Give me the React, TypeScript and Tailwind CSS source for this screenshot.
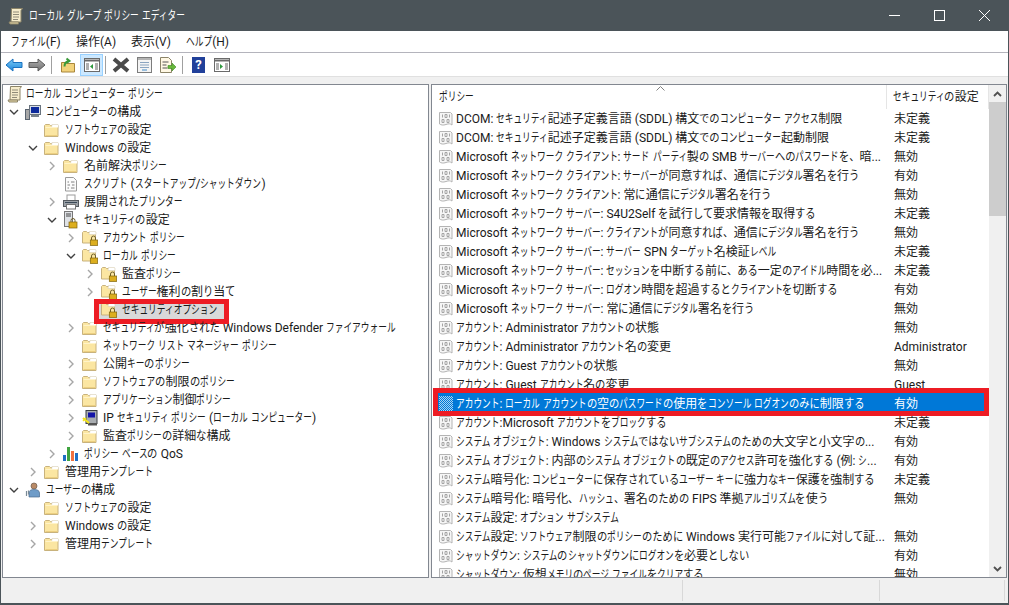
import { ReactNode } from 'react';

// the reference font has condensed kana; Noto's kana are exactly 1em wide so a run can be scaled from its length
const KATAKANA_PX = 8.7;
const HIRAGANA_PX = 10.3;
const FONT_PX = 12;

function KanaRun({ text, px }: { text: string; px: number }) {
  return (
    <span
      className="inline-block origin-left"
      style={{ transform: `scaleX(${px / FONT_PX})`, marginRight: -(FONT_PX - px) * text.length }}
    >
      {text}
    </span>
  );
}

function JP({ text }: { text: string }) {
  const parts = text.split(/([\u30A0-\u30FF]+|[\u3001\u3040-\u309F]+)/);
  return (
    <span>
      {parts.map((p, i) => {
        if (/^[\u30A0-\u30FF]/.test(p)) return <KanaRun key={i} text={p} px={KATAKANA_PX} />;
        if (/^[\u3001\u3040-\u309F]/.test(p)) return <KanaRun key={i} text={p} px={HIRAGANA_PX} />;
        return (
          <span key={i} className="whitespace-pre">
            {p}
          </span>
        );
      })}
    </span>
  );
}

function Folder() {
  return (
    <svg width="16" height="16" viewBox="0 0 16 16">
      <path d="M0.500 3.500l1-1h4l1 1h7.500v11h-13.500z" fill="#fbe6a2" stroke="#c8b27c" />
      <path d="M8 2.500h6l.5 1v2h-7z" fill="#fff" stroke="#d8cfb4" strokeWidth="0.600" />
      <path d="M1.500 5.500h12" stroke="#fff3c8" />
      <path d="M1.500 13.500h12" stroke="#eccf80" />
    </svg>
  );
}

function LockFolder() {
  return (
    <svg width="16" height="16" viewBox="0 0 16 16">
      <path d="M0.500 2.500l1-1h3l1 1h8v10.500h-13z" fill="#fbe6a2" stroke="#c8b27c" />
      <path d="M7.500 1.500h6l.5 1v2h-7z" fill="#fff" stroke="#d8cfb4" strokeWidth="0.600" />
      <path d="M9.500 10v-2a2 2 0 0 1 4 0v2" fill="none" stroke="#6e5f2a" />
      <rect x="8.300" y="10" width="7.400" height="5.500" fill="#dcae1e" stroke="#80650e" strokeWidth="0.700" />
    </svg>
  );
}

function Scroll() {
  return (
    <svg width="16" height="18" viewBox="0 0 16 18">
      <path d="M3.500 1.500h11l-1.500 2v11.500h-10z" fill="#f6eccb" stroke="#8c8468" />
      <path d="M5 5h6M5 7.500h6M5 10h6M5 12.500h5" stroke="#8f8a78" />
      <path d="M1 15h9.500v2h-8.500z" fill="#e8d9a8" stroke="#8c8468" />
    </svg>
  );
}

function ComputerIcon() {
  return (
    <svg width="16" height="16" viewBox="0 0 16 16">
      <rect x="0.500" y="5.500" width="4" height="10" fill="#a8a8a8" stroke="#5a6470" />
      <rect x="4.500" y="1.500" width="11" height="9" fill="#d8dee6" stroke="#69737e" />
      <rect x="6" y="3" width="8" height="6" fill="#0d2a9c" />
      <path d="M6 12h8" stroke="#78828c" strokeWidth="2" />
    </svg>
  );
}

function UserIcon() {
  return (
    <svg width="16" height="16" viewBox="0 0 16 16">
      <circle cx="9" cy="4" r="3" fill="#b98a66" stroke="#6d5a4c" strokeWidth="0.700" />
      <path d="M4 15v-4c0-2.500 2-3.500 5-3.500s5.500 1 5.500 3.500v4z" fill="#6f9cc8" stroke="#4a6a8c" strokeWidth="0.700" />
      <path d="M1.500 9v5M3.500 8.500v4" stroke="#7a8a96" strokeWidth="1.200" />
    </svg>
  );
}

function ScriptIcon() {
  return (
    <svg width="16" height="16" viewBox="0 0 16 16">
      <path d="M2.500 1.500h8l3 3v10.500h-11z" fill="#fbfbfb" stroke="#9a9a9a" />
      <path d="M4.500 6h1.500M8 6h3.500M9 9h2.500M4.500 9h2.500M4.500 12h1.500M8 12h3.500" stroke="#808080" />
    </svg>
  );
}

function PrinterIcon() {
  return (
    <svg width="16" height="16" viewBox="0 0 16 16">
      <rect x="4" y="1" width="8" height="6" fill="#fff" stroke="#9b9b9b" />
      <rect x="0.500" y="6.500" width="15" height="6" fill="#9aa0a6" stroke="#565b60" />
      <rect x="3.500" y="10.500" width="9" height="4.500" fill="#fff" stroke="#777" />
      <path d="M2 8.500h12" stroke="#3c4a58" />
    </svg>
  );
}

function ServerLock() {
  return (
    <svg width="16" height="18" viewBox="0 0 16 18">
      <rect x="1.500" y="0.500" width="8" height="15" fill="#dfe2e6" stroke="#777" />
      <path d="M3 3h5M3 5h5" stroke="#444" />
      <path d="M8 11v-1.500a2 2 0 0 1 4 0v1.500" fill="none" stroke="#6e5f2a" />
      <rect x="6" y="11" width="8" height="6" fill="#dcae1e" stroke="#80650e" strokeWidth="0.700" />
    </svg>
  );
}

function QosIcon() {
  return (
    <svg width="16" height="16" viewBox="0 0 16 16">
      <rect x="0" y="9" width="3" height="6" fill="#1f6fc4" />
      <rect x="4" y="1" width="3" height="14" fill="#3fa43f" />
      <rect x="8" y="5" width="3" height="10" fill="#f07040" />
      <rect x="12" y="7" width="3" height="8" fill="#1f6fc4" />
    </svg>
  );
}

function IpSecIcon() {
  return (
    <svg width="16" height="16" viewBox="0 0 16 16">
      <rect x="4" y="0.500" width="11" height="13" fill="#a9adb1" stroke="#3a3f44" />
      <rect x="6" y="2.500" width="7" height="5" fill="#1414a8" />
      <rect x="6" y="13" width="9" height="2.500" fill="#555" />
      <path d="M1 8l6 5" stroke="#f2e21c" strokeWidth="2.200" />
      <path d="M1 11l3-3" stroke="#f2e21c" strokeWidth="1.500" />
    </svg>
  );
}

function PolicyIcon({ selected }: { selected?: boolean }) {
  if (selected) {
    return (
      <svg width="14" height="15" viewBox="0 0 14 15">
        <defs>
          <pattern id="chk" width="2" height="2" patternUnits="userSpaceOnUse">
            <rect width="2" height="2" fill="#0078d7" />
            <rect width="1" height="1" fill="#a8d4f2" />
            <rect x="1" y="1" width="1" height="1" fill="#a8d4f2" />
          </pattern>
        </defs>
        <rect width="14" height="15" fill="url(#chk)" />
      </svg>
    );
  }
  return (
    <svg width="14" height="15" viewBox="0 0 14 15">
      <path d="M0.500 1.500h11l1.500 1.500v11c-2-1.500-3-1.500-6-.5s-5 .5-6.500-.5z" fill="#f6f6f6" stroke="#b4b4b4" />
      <path d="M3.500 3.500v3M6 3.500h2v3h-2zM3 8.500h2v3h-2zM8 8.500h2v3h-2zM10.500 3.500v3" fill="none" stroke="#a4a4a4" />
    </svg>
  );
}

type Row = { lvl: 0 | 1 | 2 | 3 | 4 | 5; arrow?: 'open' | 'closed'; icon: ReactNode; text: string; red?: boolean };

const padByLvl = ['pl-[4px]', 'pl-[1px]', 'pl-[20px]', 'pl-[39px]', 'pl-[58px]', 'pl-[77px]'];

const treeRows: Row[] = [
  { lvl: 0, icon: <Scroll />, text: 'ローカル コンピューター ポリシー' },
  { lvl: 1, arrow: 'open', icon: <ComputerIcon />, text: 'コンピューターの構成' },
  { lvl: 2, icon: <Folder />, text: 'ソフトウェアの設定' },
  { lvl: 2, arrow: 'open', icon: <Folder />, text: 'Windows の設定' },
  { lvl: 3, arrow: 'closed', icon: <Folder />, text: '名前解決ポリシー' },
  { lvl: 3, icon: <ScriptIcon />, text: 'スクリプト (スタートアップ/シャットダウン)' },
  { lvl: 3, arrow: 'closed', icon: <PrinterIcon />, text: '展開されたプリンター' },
  { lvl: 3, arrow: 'open', icon: <ServerLock />, text: 'セキュリティの設定' },
  { lvl: 4, arrow: 'closed', icon: <LockFolder />, text: 'アカウント ポリシー' },
  { lvl: 4, arrow: 'open', icon: <LockFolder />, text: 'ローカル ポリシー' },
  { lvl: 5, arrow: 'closed', icon: <LockFolder />, text: '監査ポリシー' },
  { lvl: 5, arrow: 'closed', icon: <LockFolder />, text: 'ユーザー権利の割り当て' },
  { lvl: 5, icon: <LockFolder />, text: 'セキュリティオプション', red: true },
  { lvl: 4, arrow: 'closed', icon: <Folder />, text: 'セキュリティが強化された Windows Defender ファイアウォール' },
  { lvl: 4, icon: <Folder />, text: 'ネットワーク リスト マネージャー ポリシー' },
  { lvl: 4, arrow: 'closed', icon: <Folder />, text: '公開キーのポリシー' },
  { lvl: 4, arrow: 'closed', icon: <Folder />, text: 'ソフトウェアの制限のポリシー' },
  { lvl: 4, arrow: 'closed', icon: <Folder />, text: 'アプリケーション制御ポリシー' },
  { lvl: 4, arrow: 'closed', icon: <IpSecIcon />, text: 'IP セキュリティ ポリシー (ローカル コンピューター)' },
  { lvl: 4, arrow: 'closed', icon: <Folder />, text: '監査ポリシーの詳細な構成' },
  { lvl: 3, arrow: 'closed', icon: <QosIcon />, text: 'ポリシー ベースの QoS' },
  { lvl: 2, arrow: 'closed', icon: <Folder />, text: '管理用テンプレート' },
  { lvl: 1, arrow: 'open', icon: <UserIcon />, text: 'ユーザーの構成' },
  { lvl: 2, icon: <Folder />, text: 'ソフトウェアの設定' },
  { lvl: 2, arrow: 'closed', icon: <Folder />, text: 'Windows の設定' },
  { lvl: 2, arrow: 'closed', icon: <Folder />, text: '管理用テンプレート' },
];

const policies: [string, string][] = [
  ['DCOM: セキュリティ記述子定義言語 (SDDL) 構文でのコンピューター アクセス制限', '未定義'],
  ['DCOM: セキュリティ記述子定義言語 (SDDL) 構文でのコンピューター起動制限', '未定義'],
  ['Microsoft ネットワーク クライアント: サード パーティ製の SMB サーバーへのパスワードを、暗...', '無効'],
  ['Microsoft ネットワーク クライアント: サーバーが同意すれば、通信にデジタル署名を行う', '有効'],
  ['Microsoft ネットワーク クライアント: 常に通信にデジタル署名を行う', '無効'],
  ['Microsoft ネットワーク サーバー: S4U2Self を試行して要求情報を取得する', '未定義'],
  ['Microsoft ネットワーク サーバー: クライアントが同意すれば、通信にデジタル署名を行う', '無効'],
  ['Microsoft ネットワーク サーバー: サーバー SPN ターゲット名検証レベル', '未定義'],
  ['Microsoft ネットワーク サーバー: セッションを中断する前に、ある一定のアイドル時間を必...', '未定義'],
  ['Microsoft ネットワーク サーバー: ログオン時間を超過するとクライアントを切断する', '有効'],
  ['Microsoft ネットワーク サーバー: 常に通信にデジタル署名を行う', '無効'],
  ['アカウント: Administrator アカウントの状態', '無効'],
  ['アカウント: Administrator アカウント名の変更', 'Administrator'],
  ['アカウント: Guest アカウントの状態', '無効'],
  ['アカウント: Guest アカウント名の変更', 'Guest'],
  ['アカウント: ローカル アカウントの空のパスワードの使用をコンソール ログオンのみに制限する', '有効'],
  ['アカウント:Microsoft アカウントをブロックする', '未定義'],
  ['システム オブジェクト: Windows システムではないサブシステムのための大文字と小文字の...', '有効'],
  ['システム オブジェクト: 内部のシステム オブジェクトの既定のアクセス許可を強化する (例: シ...', '有効'],
  ['システム暗号化: コンピューターに保存されているユーザー キーに強力なキー保護を強制する', '未定義'],
  ['システム暗号化: 暗号化、ハッシュ、署名のための FIPS 準拠アルゴリズムを使う', '無効'],
  ['システム設定: オプション サブシステム', ''],
  ['システム設定: ソフトウェア制限のポリシーのために Windows 実行可能ファイルに対して証...', '無効'],
  ['シャットダウン: システムのシャットダウンにログオンを必要としない', '有効'],
  ['シャットダウン: 仮想メモリのページ ファイルをクリアする', '無効'],
];

function Chevron({ dir }: { dir?: 'open' | 'closed' }) {
  return (
    <span className="w-[19px] h-full flex items-center justify-center shrink-0">
      {dir === 'open' && (
        <svg width="10" height="6" viewBox="0 0 10 6">
          <path d="M1 1l4 4 4-4" fill="none" stroke="#404040" strokeWidth="1.400" />
        </svg>
      )}
      {dir === 'closed' && (
        <svg width="6" height="10" viewBox="0 0 6 10">
          <path d="M1 1l4 4-4 4" fill="none" stroke="#a6a6a6" strokeWidth="1.400" />
        </svg>
      )}
    </span>
  );
}

function TreeRow({ row }: { row: Row }) {
  if (row.lvl === 0) {
    return (
      <div className="h-[18px] flex items-center pl-[4px] whitespace-nowrap">
        <span className="w-4 mr-[3px] flex">{row.icon}</span>
        <JP text={row.text} />
      </div>
    );
  }
  return (
    <div className={`h-[18px] flex items-center whitespace-nowrap ${padByLvl[row.lvl]}`}>
      <Chevron dir={row.arrow} />
      {row.red ? (
        <span className="relative self-end flex items-center h-[15px] pb-[3px] pl-[2px] pr-[7px] bg-[#d9d9d9]">
          <span className="w-4 mr-[5px] flex">{row.icon}</span>
          <JP text={row.text} />
          <span className="absolute left-[-5px] right-[-5px] top-[-5px] bottom-[-5px] border-[5px] border-[#ed1c24]" />
        </span>
      ) : (
        <>
          <span className="w-4 ml-[2px] mr-[5px] flex">{row.icon}</span>
          <JP text={row.text} />
        </>
      )}
    </div>
  );
}

function PolicyRow({ name, value, selected }: { name: string; value: string; selected?: boolean }) {
  return (
    <div className={`relative h-[19px] flex items-center whitespace-nowrap ${selected ? 'text-white' : ''}`}>
      {selected ? <div className="absolute left-[3px] right-0 top-[-1px] bottom-[2px] bg-[#0078d7]" /> : null}
      <span className="relative w-[455px] flex items-center pl-[7px] shrink-0 overflow-hidden">
        <span className="w-[17px] shrink-0 flex">
          <PolicyIcon selected={selected} />
        </span>
        <JP text={name} />
      </span>
      <span className="relative pl-[7px]">
        <JP text={value} />
      </span>
      {selected ? (
        <div className="absolute left-[1px] right-0 top-[-6px] bottom-[-3px] border-[5px] border-[#ed1c24]" />
      ) : null}
    </div>
  );
}

function Toolbar() {
  return (
    <div className="h-[23px] flex items-center pl-[4px] bg-white">
      <svg width="18" height="14" viewBox="0 0 18 14">
        <defs>
          <linearGradient id="bk" x1="0" y1="0" x2="0" y2="1">
            <stop offset="0" stopColor="#7cccf6" />
            <stop offset="1" stopColor="#1c86dc" />
          </linearGradient>
          <linearGradient id="fw" x1="0" y1="0" x2="0" y2="1">
            <stop offset="0" stopColor="#b0b0b0" />
            <stop offset="1" stopColor="#707070" />
          </linearGradient>
        </defs>
        <path d="M1 7l7-6v3.500h9v5h-9v3.500z" fill="url(#bk)" stroke="#1a72c0" />
      </svg>
      <svg width="18" height="14" viewBox="0 0 18 14" className="ml-[5px]">
        <path d="M17 7l-7-6v3.500h-9v5h9v3.500z" fill="url(#fw)" stroke="#5c5c5c" />
      </svg>
      <span className="w-px h-[18px] bg-[#a0a0a0] ml-[5px]" />
      <svg width="16" height="16" viewBox="0 0 16 16" className="ml-[8px]">
        <path d="M1.500 5.500h4l1 1h8v8.500h-13z" fill="#f2d27a" stroke="#a8853a" />
        <path d="M4.500 9.500c0-3 1.500-5 4.500-5.500M6.500 1.500l3 2.500-3 2" stroke="#3a9a3a" strokeWidth="2" fill="none" />
      </svg>
      <span className="w-[23px] h-[22px] ml-[4px] bg-[#cce8ff] border border-[#99d1ff] flex items-center justify-center">
        <svg width="16" height="14" viewBox="0 0 16 14">
          <rect x="0.500" y="0.500" width="15" height="13" fill="#fff" stroke="#6a6a6a" />
          <path d="M0.500 2.500h15" stroke="#6a6a6a" strokeWidth="2" />
          <path d="M2 5h3v7h-3zM11 5h3v7h-3z" fill="#b0b0b0" />
          <path d="M9 6v5l-3-2.500z" fill="#2e9a3e" />
        </svg>
      </span>
      <span className="w-px h-[18px] bg-[#a0a0a0] ml-[2px]" />
      <svg width="18" height="16" viewBox="0 0 18 16" className="ml-[6px]">
        <path d="M2 2l14 12M16 2l-14 12" stroke="#4a4a4a" strokeWidth="4" />
      </svg>
      <svg width="16" height="16" viewBox="0 0 16 16" className="ml-[7px]">
        <rect x="0.500" y="0.500" width="14" height="15" fill="#f4f4f4" stroke="#7c7c7c" />
        <path d="M1 2h13" stroke="#b4b4b4" strokeWidth="2" />
        <path d="M3 5.500h9M3 8h9M3 10.500h9" stroke="#8aa4c0" />
        <path d="M5 13h5" stroke="#3e8ac8" />
      </svg>
      <svg width="17" height="16" viewBox="0 0 17 16" className="ml-[7px]">
        <path d="M0.500 0.500h8l3 3v12h-11z" fill="#fff8e4" stroke="#8c8468" />
        <path d="M2.500 5h6M2.500 8h4M2.500 11h5" stroke="#555" />
        <path d="M8 8.500h4v-2.500l4 4-4 4v-2.500h-4z" fill="#68b83c" stroke="#3e8a24" strokeWidth="0.600" />
      </svg>
      <span className="w-px h-[18px] bg-[#a0a0a0] ml-[5px]" />
      <span className="ml-[9px] w-[13px] h-[16px] bg-[#21409a] text-white text-[13px] leading-[16px] text-center font-bold">?</span>
      <svg width="16" height="14" viewBox="0 0 16 14" className="ml-[9px]">
        <rect x="0.500" y="0.500" width="15" height="13" fill="#fff" stroke="#6a6a6a" />
        <path d="M0.500 2.500h15" stroke="#6a6a6a" strokeWidth="2" />
        <path d="M2 5h3v7h-3zM11 5h3v7h-3z" fill="#b0b0b0" />
        <path d="M6 6v5l3-2.500z" fill="#2e9a3e" />
      </svg>
    </div>
  );
}

export default function App() {
  return (
    <div className="w-[1009px] h-[605px] overflow-hidden flex flex-col bg-[#4b5459] px-px pb-[2px] text-[12px] leading-[16px] text-[#1a1a1a] [font-family:Roboto,'Noto_Sans_CJK_JP',sans-serif]">
      {/* title bar */}
      <div className="h-[31px] shrink-0 flex items-center text-white">
        <span className="ml-[7px] mr-[5px] flex">
          <Scroll />
        </span>
        <JP text="ローカル グループ ポリシー エディター" />
        <div className="ml-auto flex items-center pr-[18px] gap-[34px]">
          <svg width="11" height="11" viewBox="0 0 11 11"><path d="M0 5.500h11" stroke="#fff" /></svg>
          <svg width="11" height="11" viewBox="0 0 11 11"><rect x="0.500" y="0.500" width="10" height="10" fill="none" stroke="#fff" /></svg>
          <svg width="11" height="11" viewBox="0 0 11 11"><path d="M0 0l11 11M11 0l-11 11" stroke="#fff" /></svg>
        </div>
      </div>
      {/* menu */}
      <div className="h-[22px] shrink-0 flex items-center bg-white border-b border-[#b4b4bc] pl-[10px]">
        <span className="w-[65px]"><JP text="ファイル(F)" /></span>
        <span className="w-[55px]"><JP text="操作(A)" /></span>
        <span className="w-[55px]"><JP text="表示(V)" /></span>
        <span><JP text="ヘルプ(H)" /></span>
      </div>
      <Toolbar />
      {/* panes */}
      <div className="flex-1 min-h-0 bg-[#f0f0f0] pt-[7px] border-t border-[#e0e0e0] flex gap-[2px]">
        <div className="w-[427px] ml-px shrink-0 bg-white border border-[#828790] overflow-hidden">
          {treeRows.map((r, i) => (
            <TreeRow key={i} row={r} />
          ))}
        </div>
        <div className="flex-1 min-w-0 mr-px bg-white border border-[#828790] overflow-hidden flex">
          <div className="flex-1 min-w-0 relative">
            <div className="relative h-[24px] flex items-center">
              <span className="w-[455px] pl-[7px] border-r border-[#e5e5e5] h-full flex items-center">
                <JP text="ポリシー" />
              </span>
              <span className="flex-1 pl-[6px] border-r border-[#e5e5e5] h-full flex items-center">
                <JP text="セキュリティの設定" />
              </span>
              <svg width="9" height="5" viewBox="0 0 9 5" className="absolute left-[224px] top-[1px]">
                <path d="M0.500 4.500l4-4 4 4" fill="none" stroke="#808080" />
              </svg>
            </div>
            {policies.map(([n, v], i) => (
              <PolicyRow key={i} name={n} value={v} selected={i === 15} />
            ))}
          </div>
          <div className="w-[17px] shrink-0 bg-[#f0f0f0] flex flex-col items-center relative">
            <div className="h-[17px] flex items-center">
              <svg width="9" height="6" viewBox="0 0 9 6"><path d="M1 5l3.500-3.500 3.500 3.500" fill="none" stroke="#505050" strokeWidth="1.800" /></svg>
            </div>
            <div className="w-full h-[114px] bg-[#cdcdcd]" />
            <div className="mt-auto h-[17px] flex items-center">
              <svg width="9" height="6" viewBox="0 0 9 6"><path d="M1 1l3.500 3.500 3.500-3.500" fill="none" stroke="#505050" strokeWidth="1.800" /></svg>
            </div>
          </div>
        </div>
      </div>
      {/* status bar */}
      <div className="h-[25px] shrink-0 bg-[#f0f0f0] flex py-[2px]">
        <span className="w-[682px] border-r border-[#d8d8d8]" />
        <span className="w-[197px] border-r border-[#d8d8d8]" />
        <span className="w-[125px] border-r border-[#d8d8d8]" />
      </div>
    </div>
  );
}
